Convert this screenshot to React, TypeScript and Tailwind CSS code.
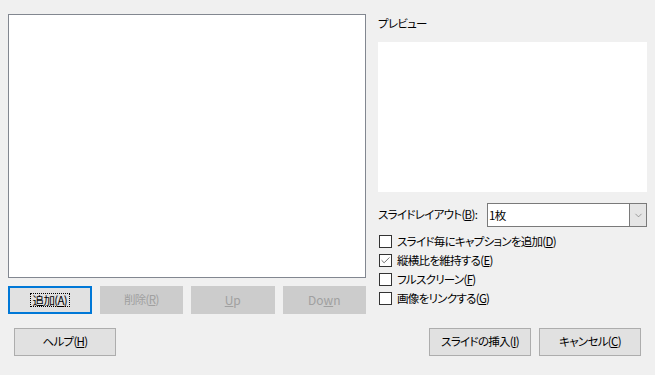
import { ChevronDown, Check } from 'lucide-react';

const font = "font-['Yu_Gothic_UI','Noto_Sans_CJK_JP',sans-serif] [font-feature-settings:'palt'] text-[11.5px] tracking-[-0.7px]";

function Btn({ children, className = '' }: { children: React.ReactNode; className?: string }) {
  return (
    <div
      className={`h-[28px] flex items-center justify-center border border-[#adadad] bg-[#e1e1e1] text-black whitespace-nowrap ${className}`}
    >
      {children}
    </div>
  );
}

function CheckRow({ label, checked = false }: { label: React.ReactNode; checked?: boolean }) {
  return (
    <div className="h-[19px] flex items-center">
      <div className="w-[13px] h-[13px] border border-[#333] bg-white flex items-center justify-center ml-px">
        {checked && <Check size={11} strokeWidth={1.5} className="text-[#333]" />}
      </div>
      <span className="ml-[5px] text-black whitespace-nowrap">{label}</span>
    </div>
  );
}

export default function App() {
  return (
    <div className={`w-[655px] h-[375px] bg-[#f0f0f0] ${font} flex flex-col`}>
      <div className="flex pt-[14px] pl-[8px]">
        {/* list + buttons */}
        <div className="flex flex-col w-[358px]">
          <div className="h-[264px] bg-white border border-[#828790]" />
          <div className="flex gap-[8px] mt-[8px]">
            <div className="w-[84px] h-[28px] border-2 border-[#0078d7] bg-[#e1e1e1] flex items-center justify-center">
              <span className="border border-dotted border-black px-[2px] leading-[12px] text-black">
                追加(<u>A</u>)
              </span>
            </div>
            <Btn className="w-[84px] !border-[#cccccc] !bg-[#cccccc] !text-[#a0a0a0]">
              削除(<u>R</u>)
            </Btn>
            <Btn className="w-[84px] !border-[#cccccc] !bg-[#cccccc] !text-[#a0a0a0] tracking-normal text-[12px]">
              <u>U</u>p
            </Btn>
            <Btn className="w-[84px] !border-[#cccccc] !bg-[#cccccc] !text-[#a0a0a0] tracking-normal text-[12px]">
              Do<u>w</u>n
            </Btn>
          </div>
        </div>

        {/* right column */}
        <div className="ml-[12px] w-[269px] flex flex-col">
          <div className="h-[28px] leading-[16px] pt-[1px] text-black">プレビュー</div>
          <div className="h-[150px] bg-white" />
          <div className="flex items-center mt-[11px]">
            <span className="text-black w-[109px] shrink-0 whitespace-nowrap">
              スライドレイアウト(<u>B</u>):
            </span>
            <div className="flex-1 h-[24px] flex border border-[#7a7a7a] bg-white">
              <span className="flex-1 pl-[1px] text-black leading-[22px]">1枚</span>
              <div className="w-[17px] border-l border-[#7a7a7a] bg-[#e5e5e5] flex items-center justify-center">
                <ChevronDown size={11} strokeWidth={1.2} className="text-[#606060]" />
              </div>
            </div>
          </div>
          <div className="mt-[5px] flex flex-col">
            <CheckRow label={<>スライド毎にキャプションを追加(<u>D</u>)</>} />
            <CheckRow checked label={<>縦横比を維持する(<u>E</u>)</>} />
            <CheckRow label={<>フルスクリーン(<u>F</u>)</>} />
            <CheckRow label={<>画像をリンクする(<u>G</u>)</>} />
          </div>
        </div>
      </div>

      <div className="flex mt-[14px] pl-[14px]">
        <Btn className="w-[102px]">
          ヘルプ(<u>H</u>)
        </Btn>
        <Btn className="w-[102px] ml-auto">
          スライドの挿入(<u>I</u>)
        </Btn>
        <Btn className="w-[102px] ml-[8px] mr-[14px]">
          キャンセル(<u>C</u>)
        </Btn>
      </div>
    </div>
  );
}
